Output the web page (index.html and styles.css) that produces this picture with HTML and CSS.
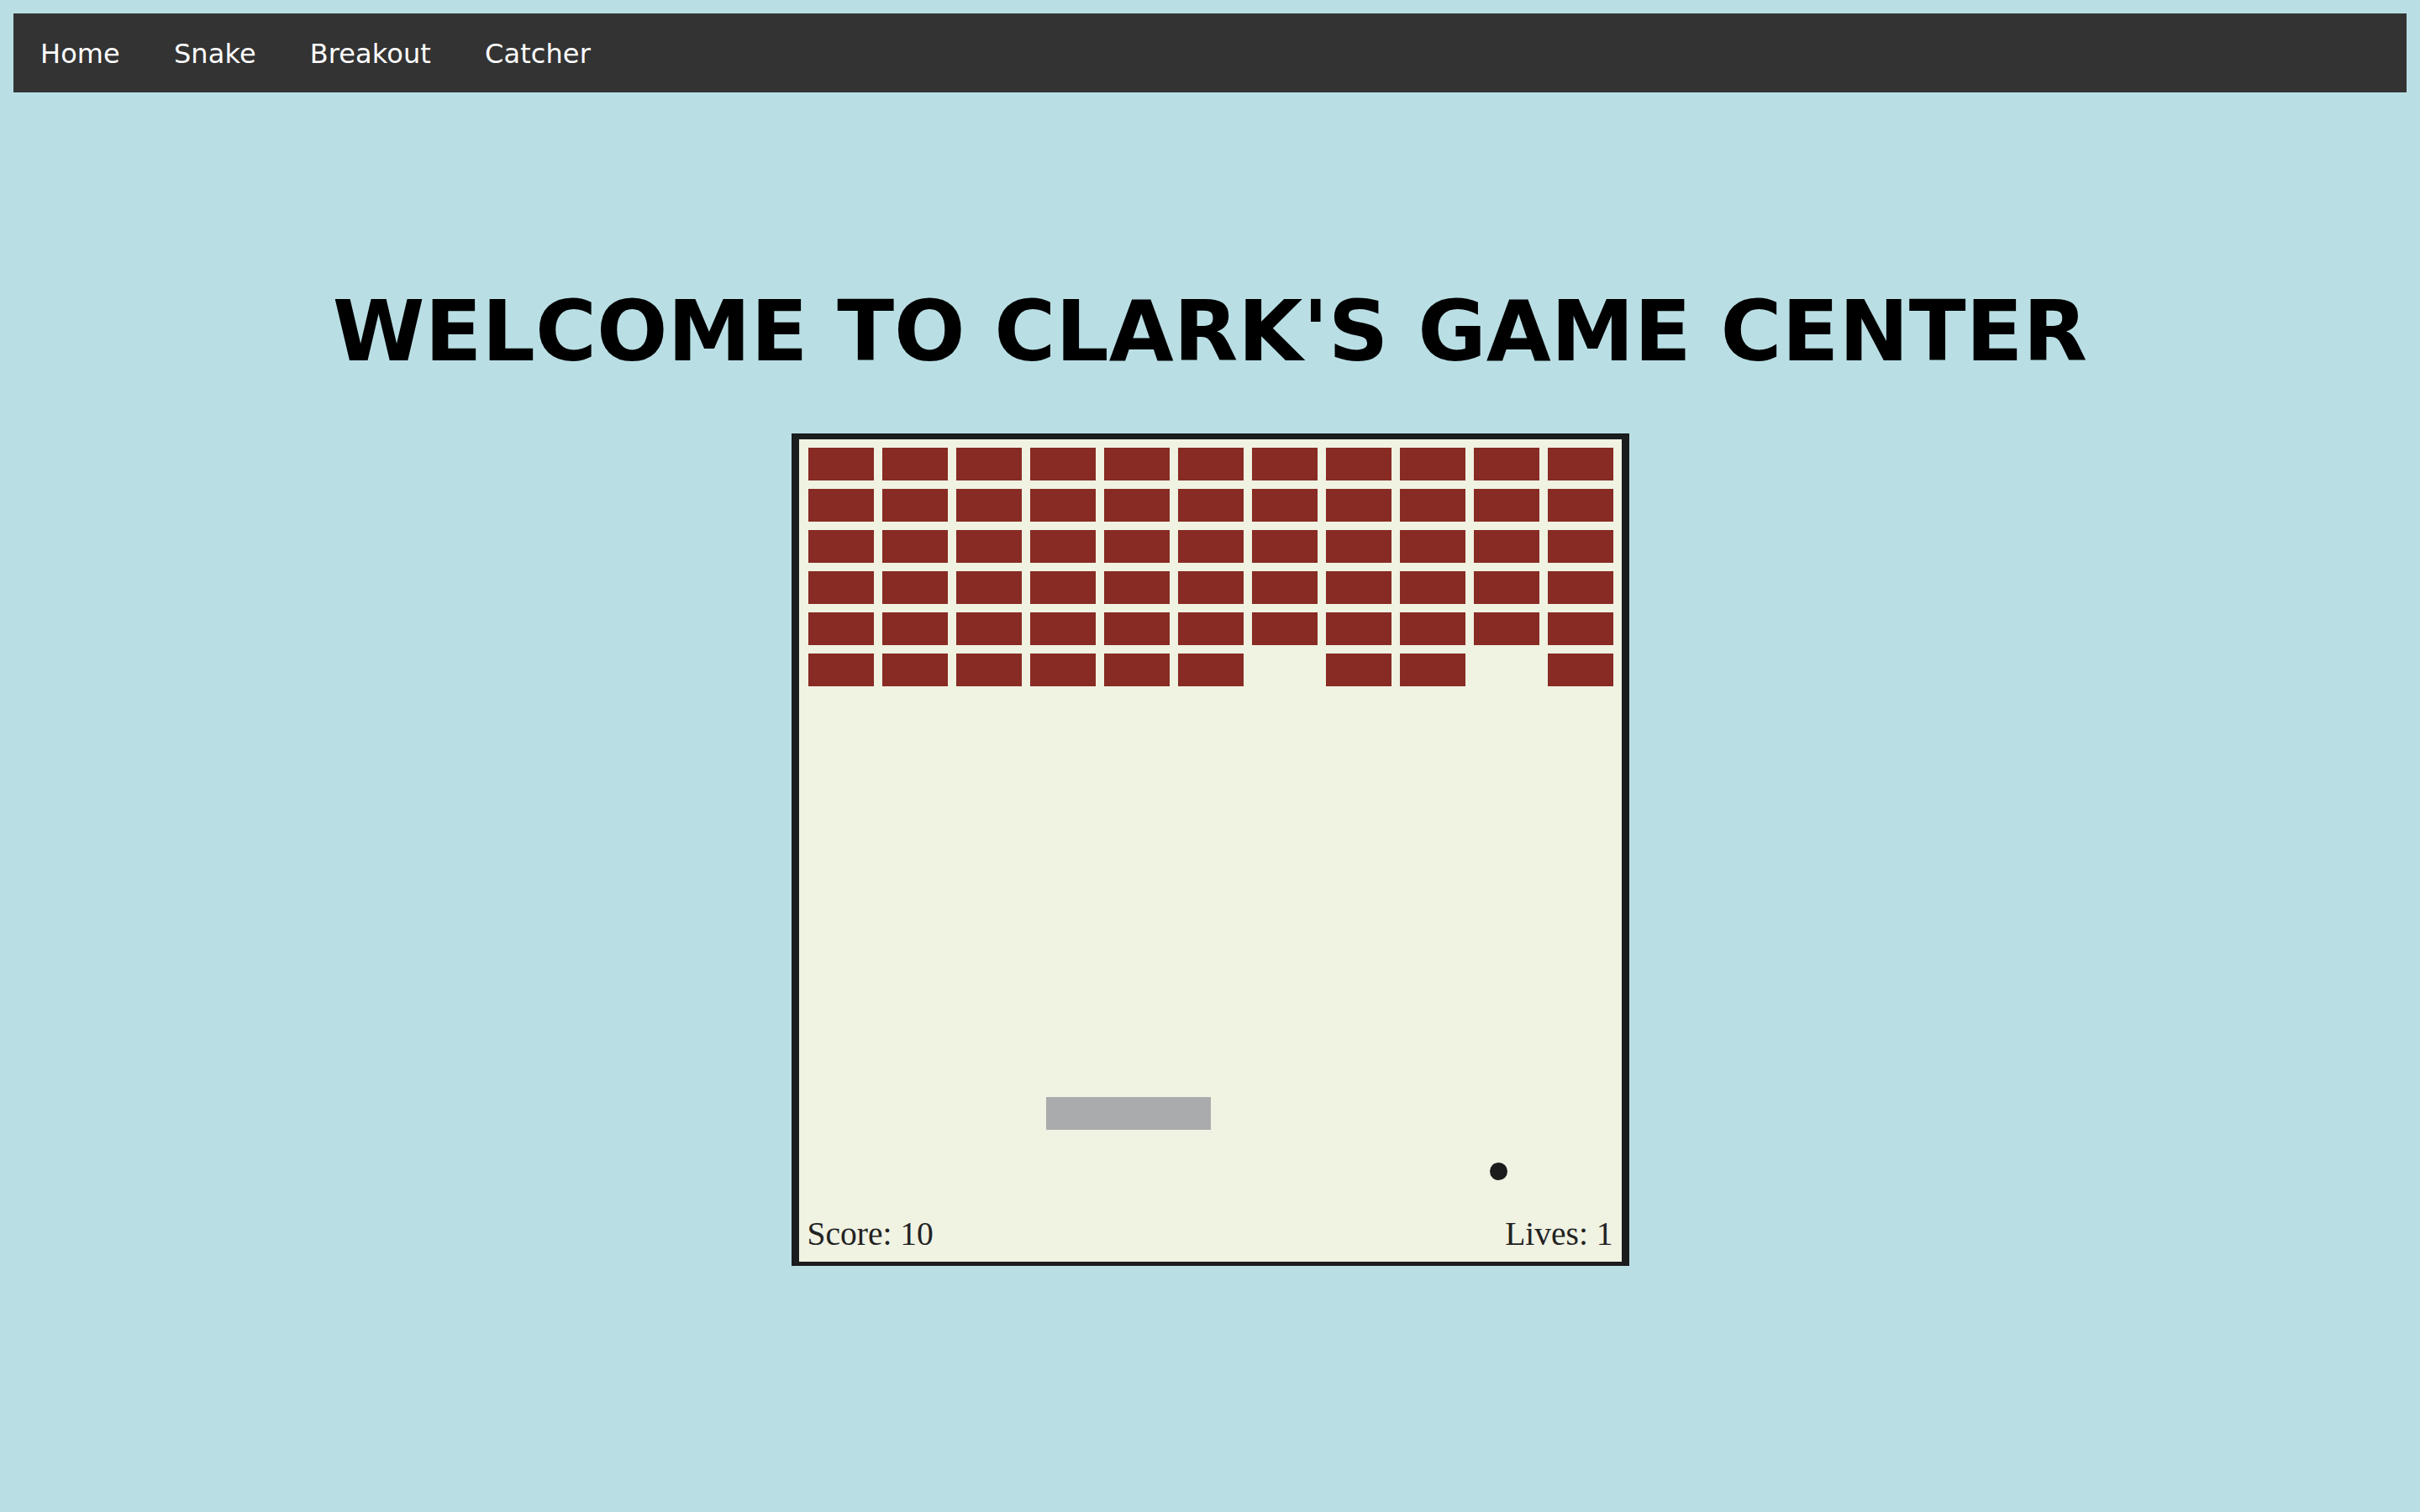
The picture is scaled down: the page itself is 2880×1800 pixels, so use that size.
FILE: index.html
```html
<!DOCTYPE html>
<html lang="en">
<head>
<meta charset="utf-8">
<title>Clark's Game Center</title>
<link rel="stylesheet" href="styles.css">
</head>
<body>
<nav class="topnav">
  <a href="#" class="nav-link">Home</a>
  <a href="#" class="nav-link">Snake</a>
  <a href="#" class="nav-link">Breakout</a>
  <a href="#" class="nav-link">Catcher</a>
</nav>
<h1 class="title">WELCOME TO CLARK'S GAME CENTER</h1>
<div class="game">
  <div class="bricks">
    <span class="brick"></span><span class="brick"></span><span class="brick"></span><span class="brick"></span><span class="brick"></span><span class="brick"></span><span class="brick"></span><span class="brick"></span><span class="brick"></span><span class="brick"></span><span class="brick"></span>
    <span class="brick"></span><span class="brick"></span><span class="brick"></span><span class="brick"></span><span class="brick"></span><span class="brick"></span><span class="brick"></span><span class="brick"></span><span class="brick"></span><span class="brick"></span><span class="brick"></span>
    <span class="brick"></span><span class="brick"></span><span class="brick"></span><span class="brick"></span><span class="brick"></span><span class="brick"></span><span class="brick"></span><span class="brick"></span><span class="brick"></span><span class="brick"></span><span class="brick"></span>
    <span class="brick"></span><span class="brick"></span><span class="brick"></span><span class="brick"></span><span class="brick"></span><span class="brick"></span><span class="brick"></span><span class="brick"></span><span class="brick"></span><span class="brick"></span><span class="brick"></span>
    <span class="brick"></span><span class="brick"></span><span class="brick"></span><span class="brick"></span><span class="brick"></span><span class="brick"></span><span class="brick"></span><span class="brick"></span><span class="brick"></span><span class="brick"></span><span class="brick"></span>
    <span class="brick"></span><span class="brick"></span><span class="brick"></span><span class="brick"></span><span class="brick"></span><span class="brick"></span><span class="brick gone"></span><span class="brick"></span><span class="brick"></span><span class="brick gone"></span><span class="brick"></span>
  </div>
  <div class="paddle"></div>
  <div class="ball"></div>
  <div class="status">
    <span class="score">Score: 10</span>
    <span class="lives">Lives: 1</span>
  </div>
</div>
</body>
</html>
```

FILE: styles.css
```css
html, body {
  background: #b9dfe5;
}
body {
  margin: 16px;
  font-family: "DejaVu Sans", Verdana, sans-serif;
}
.topnav {
  display: flex;
  background: #333333;
  height: 94px;
  align-items: center;
}
.nav-link {
  color: #ffffff;
  text-decoration: none;
  font-size: 32px;
  line-height: 37px;
  letter-spacing: 0.1px;
  padding: 3px 32px 0 32px;
}
.title {
  font-family: "DejaVu Sans", Verdana, sans-serif;
  font-weight: bold;
  font-size: 99.5px;
  line-height: 116px;
  text-align: center;
  color: #000;
  margin: 227px 0 63px 0;
}
.game {
  position: relative;
  box-sizing: content-box;
  width: 979px;
  height: 979px;
  margin: 0 auto;
  background: #f0f2e2;
  border-style: solid;
  border-color: #1a1c1e;
  border-width: 7px 9px 5px 9px;
  display: flex;
  flex-direction: column;
}
.bricks {
  display: grid;
  grid-template-columns: repeat(11, 78px);
  grid-auto-rows: 39px;
  column-gap: 10px;
  row-gap: 10px;
  padding: 10px 0 0 11px;
}
.brick {
  background: #882b24;
}
.brick.gone {
  background: transparent;
}
.paddle {
  position: absolute;
  left: 294px;
  top: 783px;
  width: 196px;
  height: 39px;
  background: #a9abac;
}
.ball {
  position: absolute;
  left: 822px;
  top: 861px;
  width: 21px;
  height: 21px;
  border-radius: 50%;
  background: #1c1c1c;
}
.status {
  margin-top: auto;
  display: flex;
  justify-content: space-between;
  padding: 0 10px 11px 10px;
  font-family: "Liberation Serif", "Times New Roman", serif;
  font-size: 39.5px;
  line-height: 44px;
  color: #222222;
}
```
